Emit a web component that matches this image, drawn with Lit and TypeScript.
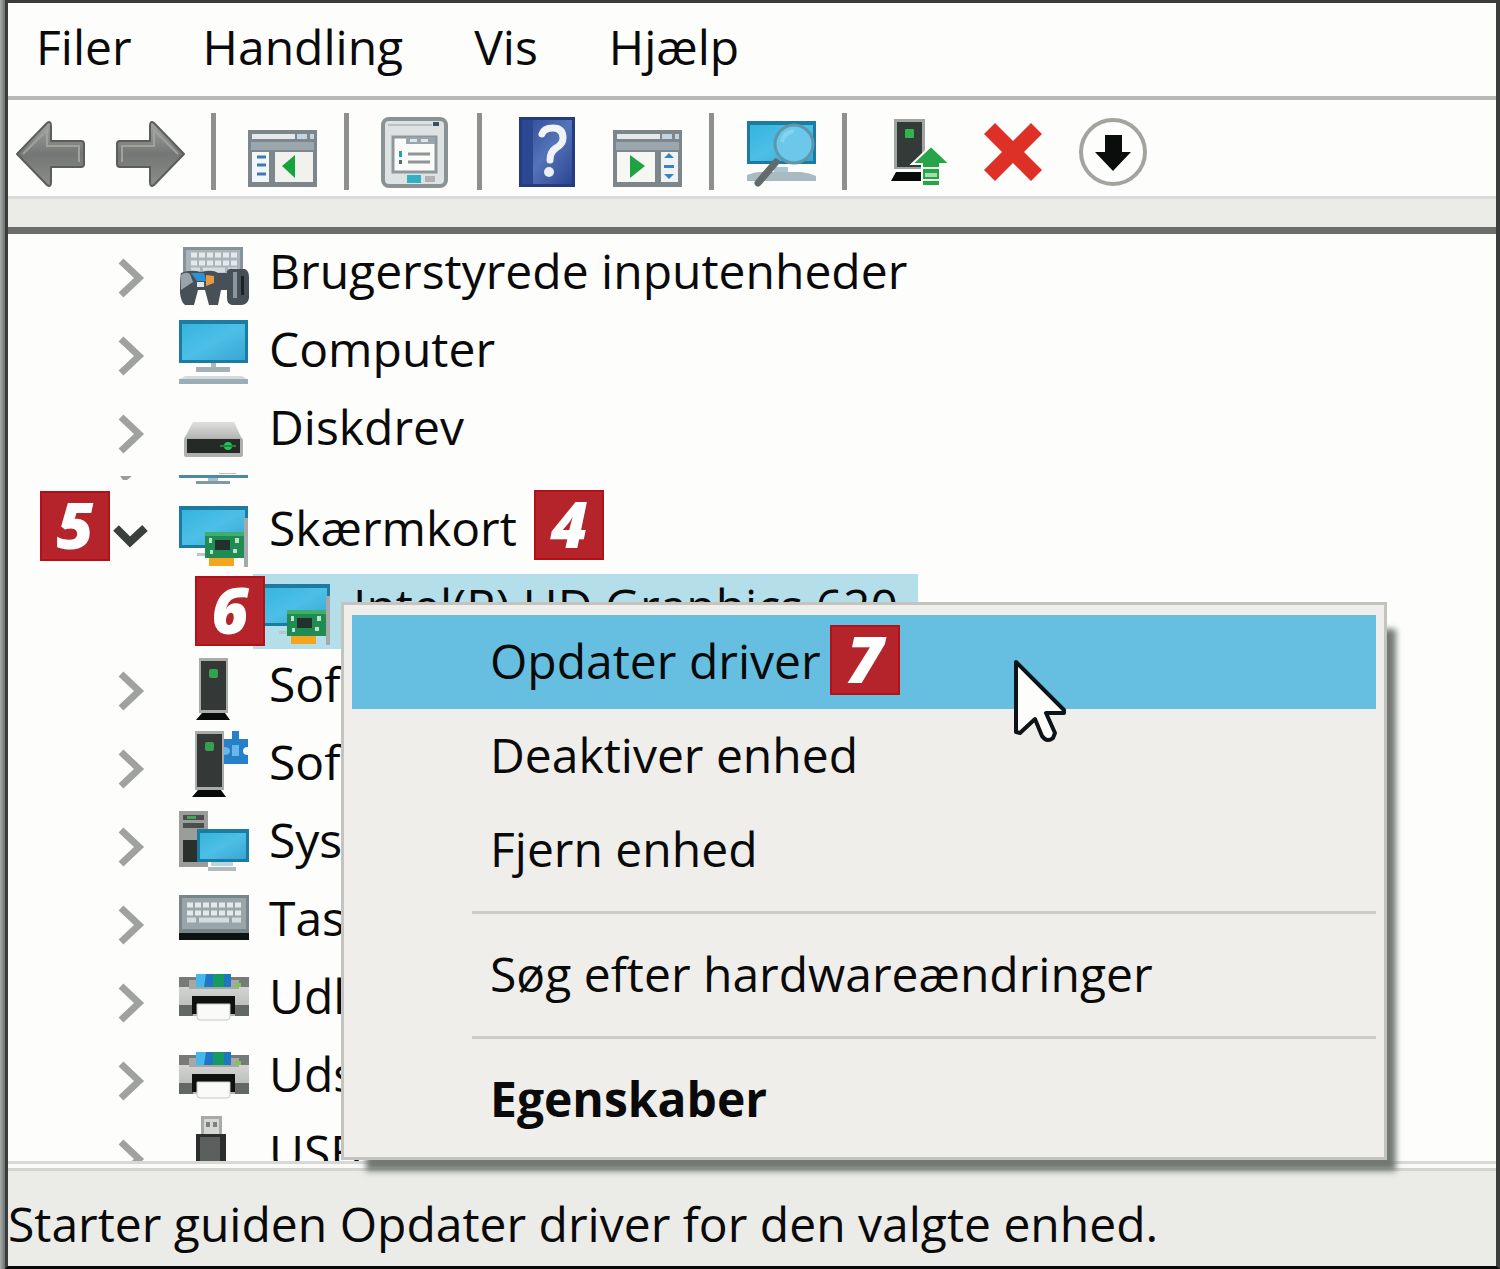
import { LitElement, html, css, svg, nothing, TemplateResult, SVGTemplateResult } from "lit";
import { customElement, state } from "lit/decorators.js";
import { classMap } from "lit/directives/class-map.js";

const monitor = (x: number, y: number, w: number, h: number) => svg`
  <rect x=${x} y=${y} width=${w} height=${h} fill="#1c7ba0"/>
  <rect x=${x + 3} y=${y + 4} width=${w - 6} height=${h - 7} fill="url(#screen)"/>`;

const tower = (x: number, y: number, h: number) => svg`
  <rect x=${x} y=${y} width="29" height=${h - 8} fill="#a9acaa"/>
  <rect x=${x + 2} y=${y + 3} width="25" height=${h - 14} fill="#343836"/>
  <rect x=${x + 10} y=${y + 11} width="9" height="9" rx="2" fill="#35a04d"/>
  <path d=${`M${x + 3} ${y + h - 8}h23l5 7h-34z`} fill="#080a09"/>`;

const defs = svg`<defs>
  <linearGradient id="screen" x1="0" y1="0" x2="1" y2="1">
    <stop offset="0" stop-color="#35b4de"/><stop offset=".5" stop-color="#4dbfe6"/><stop offset="1" stop-color="#38a6d4"/>
  </linearGradient>
  <linearGradient id="metal" x1="0" y1="0" x2="0" y2="1">
    <stop offset="0" stop-color="#a2a4a1"/><stop offset=".5" stop-color="#737674"/><stop offset="1" stop-color="#8b8e8b"/>
  </linearGradient>
  <linearGradient id="book" x1="0" y1="0" x2="1" y2="1">
    <stop offset="0" stop-color="#2d4a93"/><stop offset=".5" stop-color="#5573b8"/><stop offset="1" stop-color="#2a4691"/>
  </linearGradient>
  <linearGradient id="silver" x1="0" y1="0" x2="0" y2="1">
    <stop offset="0" stop-color="#dfe0de"/><stop offset="1" stop-color="#b2b4b1"/>
  </linearGradient>
</defs>`;

const card = svg`
  ${monitor(0, 10, 69, 42)}
  <path d="M18 57h12v3h-12z" fill="#b9c6cb"/>
  <path d="M65 22h4v49h-4z" fill="#a5aaa8"/>
  <rect x="30" y="60" width="25" height="10" fill="#f4a51f"/>
  <rect x="26" y="36" width="39" height="26" fill="#1f8c54"/>
  <path d="M26 36h39v4h-39z" fill="#3fae6b"/>
  <rect x="36" y="44" width="15" height="10" fill="#22312b"/>
  <path d="M30 42h3v5h-3zM56 42h4v5h-4zM54 53h4v4h-4zM31 54h3v4h-3z" fill="#bfe0cc"/>`;

const printer = svg`
  <rect x="0" y="13" width="70" height="39" fill="url(#silver)"/>
  <path d="M0 13h70v10H0z" fill="#767a78"/>
  <path d="M10 16h50v9H10z" fill="#a5a8a6"/>
  <path d="M17 10h35v13H17z" fill="#1f77c4"/>
  <path d="M17 10h10l-2 13h-8z" fill="#48b7ea"/>
  <path d="M34 10h11v13h-11z" fill="#169a63"/>
  <rect x="56" y="19" width="6" height="4" fill="#7fc553"/>
  <path d="M0 41h14v11H0zM56 41h14v11H56z" fill="#636866"/>
  <rect x="13" y="32" width="43" height="18" fill="#0e1110"/>
  <path d="M18 40h33v13q0 3-3 3h-27q-3 0-3-3z" fill="#fafaf8" stroke="#c8c9c6" stroke-width="1"/>`;

const keys = (x: number, y: number, w: number) => svg`
  <path d=${`M${x} ${y}h${w}M${x} ${y + 8}h${w}`} stroke="#e4eaeb" stroke-width="5" stroke-dasharray="6 2" fill="none"/>
  <path d=${`M${x} ${y + 15}h9m3 0h${w - 24}m3 0h9`} stroke="#d5dcde" stroke-width="5" fill="none"/>`;

const treeIcons: Record<string, SVGTemplateResult> = {
  hid: svg`
    <rect x="4" y="8" width="60" height="28" fill="#85949a"/>
    <rect x="7" y="11" width="54" height="25" fill="#a9b5b9"/>
    ${keys(12, 16, 46)}
    <path d="M2 34q9-4 20-1 12-3 17 1h9v-2q2-3 6-2h12q4 2 4 8v21q-1 6-7 7h-10q-5-1-5-7v-8h-6l-3 15h-9l-4-15h-7l-4 15h-9q-4-3-5-12 0-17 1-20z" fill="#475056"/>
    <path d="M2 36q5-4 9-1l3 8-12 8z" fill="#9aa4a8"/>
    <path d="M12 34h13l2 8h-9z" fill="#2b93d2"/>
    <path d="M27 36l8 1 0 7-8 3z" fill="#e79a46"/>
    <path d="M18 43h7v5h-7z" fill="#d9e6ea"/>
    <path d="M54 33h4v26h-4z" fill="#8b979c"/>
    <path d="M62 37h3v19h-3z" fill="#1c2326"/>`,
  computer: svg`
    ${monitor(0, 3, 69, 43)}
    <path d="M32 46h5v4h-5z" fill="#a9bac1"/><path d="M17 50h34v5h-34z" fill="#a3b1b6"/>
    <path d="M6 59h57l6 4H0z" fill="#d4dbde"/><path d="M0 62h69v5H0z" fill="#9badb5"/>`,
  disk: svg`
    <path d="M14 27h41l8 17H5z" fill="url(#silver)"/>
    <rect x="5" y="43" width="59" height="19" rx="2" fill="#aeb0ad"/>
    <rect x="8" y="44" width="53" height="14" fill="#262a27"/>
    <circle cx="49" cy="51" r="4" fill="#2bc155"/><path d="M41 50h16v2h-16z" fill="#1b8a3c"/>`,
  card,
  software: tower(20, 6, 63),
  component: svg`
    ${tower(16, 1, 67)}
    <path d="M45 9h8V1h7v8h9v8q-5 0-5 4t5 4v9H45z" fill="#2680c8"/>
    <path d="M45 17q6 0 6 4t-6 4zM53 15h7v11h-7z" fill="#69b6ea"/>`,
  system: svg`
    <rect x="0" y="3" width="29" height="56" fill="#9b9d9b"/>
    <path d="M4 7h21v5H4zM4 15h21v5H4z" fill="#4a4f4c"/><path d="M8 8h9v3h-9z" fill="#40a55c"/>
    <path d="M4 32h16v22H4z" fill="#2b302d"/>
    ${monitor(18, 21, 52, 33)}
    <path d="M32 54h22v4h-22z" fill="#b4d6e0"/><path d="M29 59h28v4h-28z" fill="#aebcc1"/>`,
  keyboard: svg`
    <rect x="0" y="9" width="70" height="45" fill="#77868b"/>
    <rect x="3" y="12" width="64" height="31" fill="#98a5a9"/>
    ${keys(8, 19, 54)}
    <path d="M0 47h70v7H0z" fill="#0d1213"/>`,
  printer,
  usb: svg`
    <rect x="22" y="-4" width="21" height="19" fill="#a8aaa8"/>
    <rect x="25" y="-1" width="15" height="15" fill="#d6d8d6"/>
    <path d="M27 2h4v5h-4zM34 2h4v5h-4z" fill="#7d807e"/>
    <rect x="17" y="14" width="30" height="40" fill="#2b2e2d"/><rect x="21" y="17" width="20" height="36" fill="#5b5f5d"/>`,
  sliver: svg`
    <path d="M40 0h17v1H40z" fill="#c2c1b4"/>
    <path d="M0 2h69v3H0z" fill="#4b89a6"/><path d="M29 5h10v3h-10z" fill="#a5c0cc"/><path d="M17 8h34v3h-34z" fill="#8199a4"/>`,
};

const paneWindow = (play: SVGTemplateResult) => svg`
  <rect x="0" y="13" width="69" height="57" fill="#7c868b"/>
  <rect x="4" y="17" width="43" height="5" fill="#e3e9ed"/><path d="M49 17h10v5h-10zM62 17h4v5h-4z" fill="#c6d3e2"/>
  <rect x="3" y="25" width="63" height="8" fill="#9aa7af"/>${play}`;

const toolIcons: Record<string, SVGTemplateResult> = {
  back: svg`<path d="M1 37L31 6q4-3 4 3v15h30q3 0 3 3v20q0 3-3 3H35v15q0 6-4 3z" fill="url(#metal)" stroke="#5a5d5b" stroke-width="2" stroke-linejoin="round"/><path d="M7 37L31 13v16h32v16" fill="none" stroke="#a0a29f" stroke-width="2"/>`,
  forward: svg`<path d="M69 37L39 6q-4-3-4 3v15H5q-3 0-3 3v20q0 3 3 3h30v15q0 6 4 3z" fill="url(#metal)" stroke="#5a5d5b" stroke-width="2" stroke-linejoin="round"/><path d="M63 37L39 13v16H7v16" fill="none" stroke="#a0a29f" stroke-width="2"/>`,
  tree: paneWindow(svg`
    <rect x="4" y="35" width="17" height="30" fill="#f3f6f8"/><rect x="27" y="35" width="38" height="30" fill="#f1f1ee"/>
    <path d="M9 40h9M9 48h9M9 57h9" stroke="#3f78b8" stroke-width="3"/>
    <path d="M47 38v23L34 49z" fill="#17a33c"/>`),
  properties: svg`
    <rect x="2" y="2" width="63" height="67" rx="6" fill="#dfe2e2" stroke="#8a9294" stroke-width="4"/>
    <path d="M7 8h44" stroke="#b9c0c2" stroke-width="2"/><path d="M52 5h6v4h-6z" fill="#35525e"/>
    <rect x="12" y="20" width="43" height="35" fill="#fbfbfa" stroke="#8e979a" stroke-width="3"/>
    <path d="M25 20h29v7H25z" fill="#9ba4aa"/><path d="M29 22h7v3h-7zM40 22h7v3h-7z" fill="#e0e5e8"/>
    <path d="M27 37h22M27 45h22" stroke="#8f9494" stroke-width="3"/><path d="M18 34h3v6h-3z" fill="#26a0b8"/><path d="M18 43h3v4h-3z" fill="#59686c"/>
    <rect x="26" y="58" width="14" height="8" fill="#2eb1c4"/><rect x="44" y="59" width="10" height="6" fill="#b0b3b2"/>`,
  help: svg`
    <rect x="5" y="0" width="56" height="70" fill="#243b80"/><rect x="8" y="3" width="50" height="64" fill="url(#book)"/>
    <path d="M8 3h11v64H8z" fill="#2c4890"/>
    <path d="M28 17q2-6 11-6 10 0 10 10 0 6-7 10-6 4-6 12" fill="none" stroke="#f1f3f7" stroke-width="7" stroke-linecap="round"/>
    <circle cx="35" cy="55" r="5" fill="#eceff5"/>`,
  action: paneWindow(svg`
    <rect x="4" y="35" width="38" height="30" fill="#f6f6f3"/><rect x="48" y="35" width="17" height="30" fill="#eef3f6"/>
    <path d="M17 38v23L32 49z" fill="#20a243"/>
    <path d="M56 36l5 5h-10zM51 48h10v3h-10zM56 62l5-5h-10z" fill="#3b83bd"/>`),
  scan: svg`
    ${monitor(1, 4, 69, 43)}
    <path d="M28 50h14v5h-14z" fill="#a5c9d6"/><path d="M1 58q10-4 20-3h34q9 1 15 4v5H1z" fill="#a9bac1"/>
    <path d="M30 45L12 66" stroke="#616a6d" stroke-width="7" stroke-linecap="round"/>
    <circle cx="48" cy="27" r="19" fill="#6bc8ea" stroke="#5e97aa" stroke-width="3"/>
    <path d="M36 25q2-10 12-11" stroke="#85d4ef" stroke-width="4" fill="none"/>`,
  update: svg`
    <rect x="15" y="2" width="31" height="50" fill="#9fa5a2"/><rect x="18" y="5" width="25" height="45" fill="#343a37"/>
    <rect x="26" y="12" width="9" height="9" rx="1" fill="#2fb44f"/>
    <path d="M17 55h26l4 9H12z" fill="#090b0a"/>
    <path d="M52 29l19 18H61v22H43V47H33z" fill="#27a447" stroke="#fdfdfc" stroke-width="2"/>
    <path d="M43 51h18M43 63h18" stroke="#e9f6ec" stroke-width="2"/><path d="M46 56h12v4h-12z" fill="#a7dcb2"/>`,
  remove: svg`<path d="M17 6l18 18L53 6l11 11-18 18 18 18-11 11-18-18-18 18L6 53l18-18L6 17z" fill="#dd3127"/>`,
  disable: svg`<circle cx="36" cy="35" r="32" fill="#fdfdfc" stroke="#a4a49e" stroke-width="4"/>
    <path d="M28 18h17v17h9L36 54 18 35h10z" fill="#0b0d0c"/>`,
};

interface Tool { icon: string; name: string }
const toolGroups: Tool[][] = [
  [{ icon: "back", name: "Tilbage" }, { icon: "forward", name: "Frem" }],
  [{ icon: "tree", name: "Vis/skjul konsoltræ" }],
  [{ icon: "properties", name: "Egenskaber" }],
  [{ icon: "help", name: "Hjælp" }, { icon: "action", name: "Vis/skjul handlingsrude" }],
  [{ icon: "scan", name: "Søg efter hardwareændringer" }],
  [{ icon: "update", name: "Opdater driver" }, { icon: "remove", name: "Fjern enhed" }, { icon: "disable", name: "Deaktiver enhed" }],
];

interface Device { icon: string; label: string }
const upper: Device[] = [
  { icon: "hid", label: "Brugerstyrede inputenheder" },
  { icon: "computer", label: "Computer" },
  { icon: "disk", label: "Diskdrev" },
];
const lower: Device[] = [
  { icon: "software", label: "Sof" },
  { icon: "component", label: "Sof" },
  { icon: "system", label: "Sys" },
  { icon: "keyboard", label: "Tas" },
  { icon: "printer", label: "Udl" },
  { icon: "printer", label: "Uds" },
  { icon: "usb", label: "USB" },
];

@customElement("app-root")
export class AppRoot extends LitElement {
  @state() private hovered = 0;

  static styles = css`
    :host { display: block; font-family: "Open Sans", "Noto Sans", sans-serif; font-size: 48px; color: #0a0a0a; }
    * { box-sizing: border-box; }
    button { font: inherit; color: inherit; background: none; border: 0; padding: 0; margin: 0; text-align: left; }
    ul { list-style: none; margin: 0; padding: 0; }
    svg { display: block; overflow: visible; }
    .frame { height: 100vh; padding-left: 5px; background: linear-gradient(90deg, #a9adaa, #6c706e 5px); }
    .window { height: 100%; display: flex; flex-direction: column; background: #fdfdfc;
      border: solid #3b3d3c; border-width: 3px 4px 3px 3px; border-bottom-color: #080808; overflow: hidden; }
    .menubar { display: flex; gap: 71px; padding: 0 28px; height: 97px; flex: none; border-bottom: 4px solid #b5bab7; line-height: 88px; }
    .menubar button { height: 88px; }
    .toolbar { display: flex; gap: 26px; padding: 13px 8px 6px; flex: none; }
    .group { display: flex; gap: 29px; align-items: center; height: 77px; }
    .group + .group { border-left: 5px solid #8e908e; padding-left: 32px; }
    .tool { width: 70px; height: 70px; }
    .strip { height: 38px; flex: none; background: #ebebe8; border-top: 3px solid #dcdddb; border-bottom: 7px solid #6c6e6c; }
    .main { flex: 1; min-height: 0; position: relative; display: flex; }
    .tree { flex: 1; overflow: hidden; padding-top: 5px; }
    .row { display: flex; height: 78px; padding-left: 103px; position: relative; white-space: nowrap; }
    .toggle { width: 40px; height: 78px; margin-right: 28px; }
    .icon { width: 70px; height: 78px; flex: none; margin-right: 20px; }
    .label { line-height: 64px; }
    .cut { height: 23px; overflow: hidden; }
    .children { display: flex; height: 78px; padding: 0 0 3px 245px; }
    .leaf { display: flex; padding: 0 20px 0 8px; background: #b4dfea; white-space: nowrap; }
    .leaf .icon { margin-right: 22px; }
    .step { position: absolute; width: 70px; height: 70px; background: #b5232b; border: 2px solid #b11117; color: #fff;
      font-size: 64px; font-weight: 800; font-style: italic; line-height: 64px; text-align: center; z-index: 1; }
    .s4 { left: 526px; top: -6px; }
    .s5 { left: 32px; top: -5px; }
    .s6 { left: 187px; top: 342px; }
    .s7 { left: 478px; top: 10px; }
    .menu { position: absolute; left: 333px; right: 109px; top: 368px; padding: 10px 8px; background: #efeeeb;
      border: 3px solid #c3c4bd; box-shadow: 17px 19px 6px -8px #747a73; z-index: 2; }
    .item { display: block; width: 100%; height: 94px; padding-left: 138px; line-height: 92px; position: relative; }
    .item span.text { display: block; height: 94px; }
    .item.on { background: #66bfe1; }
    .item.default { font-weight: 700; }
    .menu hr { margin: 14px 0 14px 120px; border: 0; height: 3px; background: #cbccc7; }
    .pointer { position: absolute; left: 659px; top: 44px; width: 56px; height: 84px; z-index: 3; }
    .status { flex: none; height: 105px; border-top: 3px solid #d8d9d6; background: #fafaf9; }
    .status p { margin: 4px 0 0; height: 98px; border-top: 3px solid #d2d4d0; background: #ebebe7; line-height: 105px; white-space: nowrap; }
  `;

  private glyph(cls: string, shape: SVGTemplateResult, h = 70) {
    return html`<svg class=${cls} viewBox="0 0 70 ${h}" aria-hidden="true">${defs}${shape}</svg>`;
  }

  private toggle(open = false) {
    const d = open ? "M5 32L19 46 34 32" : "M10 22L28 39 10 56";
    return html`<button class="toggle" aria-label=${open ? "Skjul" : "Udvid"}>
      <svg viewBox="0 0 40 78" width="40" height="78">
        <path d=${d} fill="none" stroke=${open ? "#3b403e" : "#a0a29f"} stroke-width=${open ? 8 : 7}/>
      </svg></button>`;
  }

  private row(n: Device): TemplateResult {
    return html`<li class="row">${this.toggle()}${this.glyph("icon", treeIcons[n.icon], 78)}<span class="label">${n.label}</span></li>`;
  }

  private item(i: number, label: string, extra: unknown = nothing, isDefault = false) {
    return html`<button role="menuitem" class=${classMap({ item: true, on: this.hovered === i, default: isDefault })}
      @mouseenter=${() => (this.hovered = i)}><span class="text">${label}</span>${extra}</button>`;
  }

  render() {
    return html`
      <div class="frame"><div class="window">
        <nav class="menubar">
          ${["Filer", "Handling", "Vis", "Hjælp"].map((m) => html`<button>${m}</button>`)}
        </nav>
        <div class="toolbar" role="toolbar">
          ${toolGroups.map((g) => html`<div class="group">
            ${g.map((t) => html`<button class="tool" aria-label=${t.name}>${this.glyph("tool", toolIcons[t.icon])}</button>`)}
          </div>`)}
        </div>
        <div class="strip"></div>
        <div class="main">
          <ul class="tree">
            ${upper.map((n) => this.row(n))}
            <li class="row cut">
              <svg class="toggle" viewBox="0 0 40 78"><path d="M9 3h12l-5 4h-4z" fill="#9b9d9b"/></svg>
              ${this.glyph("icon", treeIcons.sliver, 78)}
            </li>
            <li class="row">${this.toggle(true)}${this.glyph("icon", treeIcons.card, 78)}<span class="label">Skærmkort</span>
              <span class="step s5">5</span><span class="step s4">4</span></li>
            <li class="children">
              <span class="leaf">${this.glyph("icon", treeIcons.card, 78)}<span class="label">Intel(R) HD Graphics 620</span></span>
            </li>
            ${lower.map((n) => this.row(n))}
          </ul>
          <span class="step s6">6</span>
          <div class="menu" role="menu">
            ${this.item(0, "Opdater driver", html`<span class="step s7">7</span>`)}
            ${this.item(1, "Deaktiver enhed")}
            ${this.item(2, "Fjern enhed")}
            <hr />
            ${this.item(3, "Søg efter hardwareændringer")}
            <hr />
            ${this.item(4, "Egenskaber", nothing, true)}
            <svg class="pointer" viewBox="0 0 56 84" aria-hidden="true">
              <path d="M13 13v70l4 1 15-14 7 17q5 7 11 2l2-5-9-20h18v-3z" fill="#fdfdfc" stroke="#0c1418" stroke-width="4" stroke-linejoin="round"/>
            </svg>
          </div>
        </div>
        <footer class="status"><p>Starter guiden Opdater driver for den valgte enhed.</p></footer>
      </div></div>`;
  }
}
